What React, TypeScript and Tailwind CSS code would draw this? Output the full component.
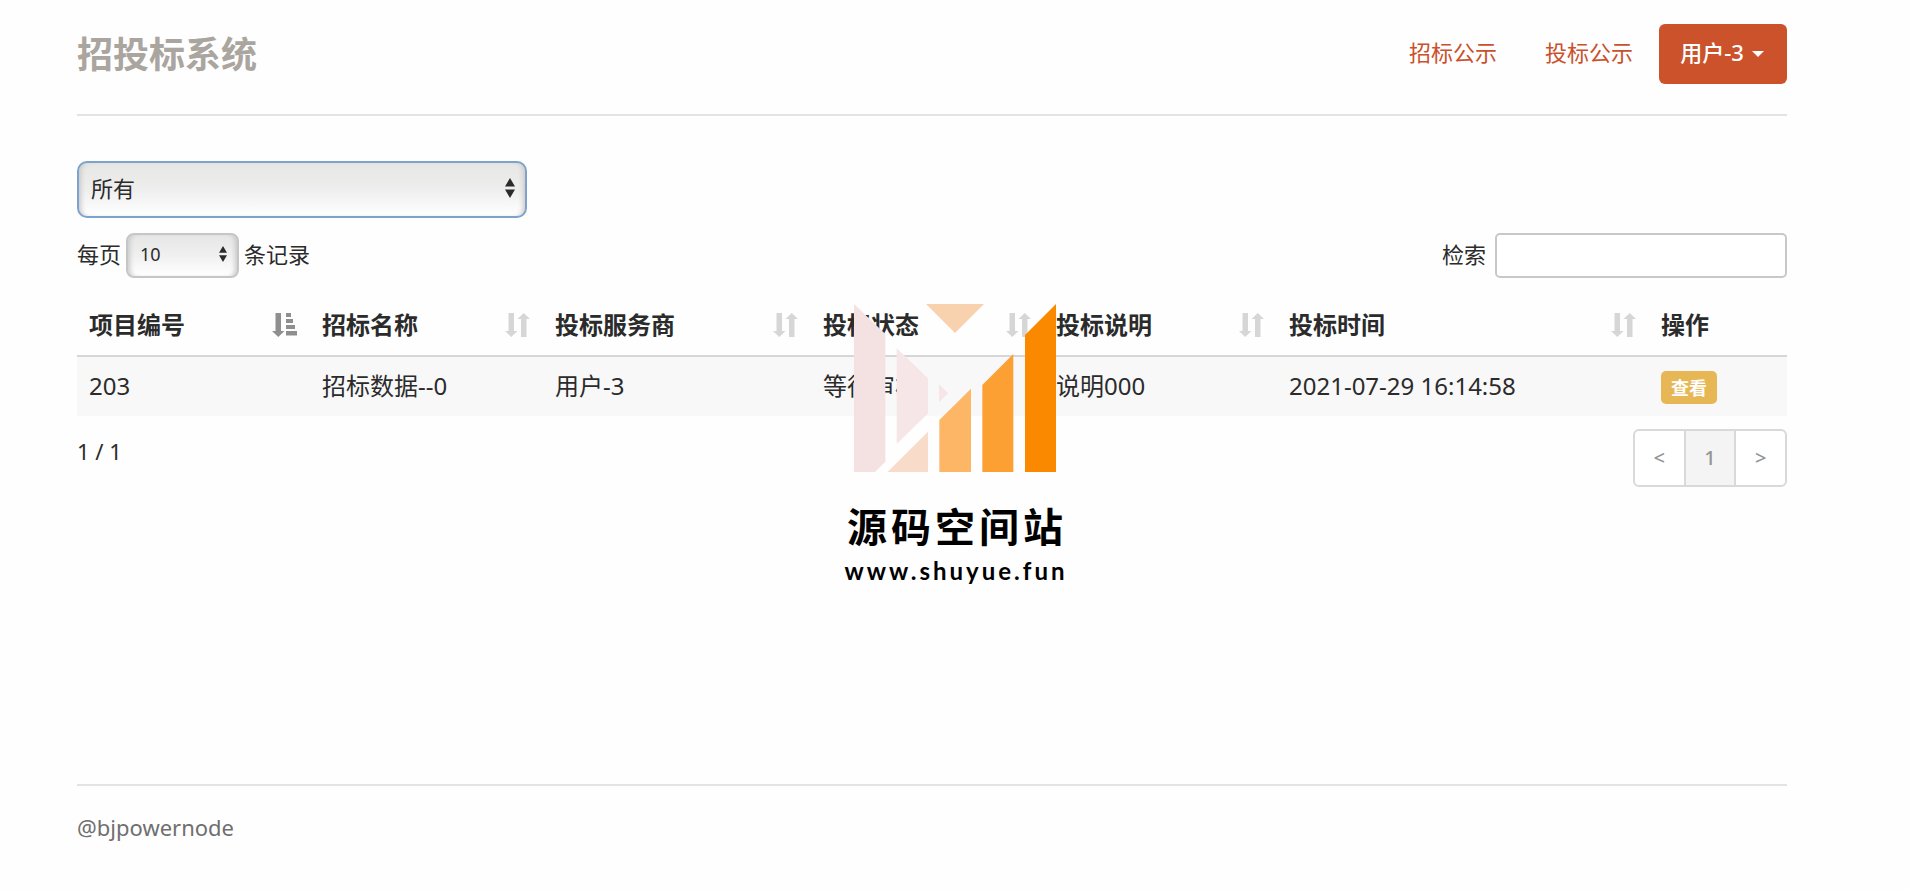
import { useState } from "react";

type SortState = "asc" | "none";

const columns: { title: string; width: string; sort?: SortState }[] = [
  { title: "项目编号", width: "w-[233px]", sort: "asc" },
  { title: "招标名称", width: "w-[233px]", sort: "none" },
  { title: "投标服务商", width: "w-[268px]", sort: "none" },
  { title: "投标状态", width: "w-[233px]", sort: "none" },
  { title: "投标说明", width: "w-[233px]", sort: "none" },
  { title: "投标时间", width: "w-[372px]", sort: "none" },
  { title: "操作", width: "w-[138px]" },
];

const rows = [["203", "招标数据--0", "用户-3", "等待审核", "说明000", "2021-07-29 16:14:58"]];

function SortIcon({ state }: { state: SortState }) {
  return (
    <svg viewBox="0 0 26 24" className={state === "asc" ? "h-6 w-[26px] text-[#8f8f8f]" : "h-6 w-[26px] text-[#d6d6d6]"} fill="currentColor" aria-hidden="true">
      <path d="M3.500 0H9v18h3.500L6.250 24 0 18h3.500z" />
      {state === "asc" ? (
        <path d="M14 0h5v4h-5zM14 6h7v4h-7zM14 12h9v4h-9zM14 18h11v4.500h-11z" />
      ) : (
        <path d="M16 24h5.500V6H25l-6.250-6L12.500 6H16z" />
      )}
    </svg>
  );
}

function Stepper({ className }: { className: string }) {
  return (
    <svg viewBox="0 0 10 20" className={className} fill="#2b2b2b" aria-hidden="true">
      <path d="M0 8.500h10L5 0zM0 11.500h10L5 20z" />
    </svg>
  );
}

function Watermark() {
  return (
    <div className="pointer-events-none absolute top-[304px] left-[842px] flex w-[226px] flex-col items-center text-black">
      <svg viewBox="102 42 606 504" className="h-[168px] w-[202px]" aria-hidden="true">
        <path fill="#f4e2e3" d="M102 42l94 90v383l-31 31h-63z" />
        <path fill="#f6e6e7" d="M230 175l94 90v105l-94 92z" />
        <path fill="#f6e6e7" d="M357 283l28 27-28 27z" />
        <path fill="#f8d2af" d="M318 42h174l-87 87z" />
        <path fill="#f8dbc8" d="M324 425v121H203z" />
        <path fill="#fdb665" d="M453 296v250h-95V390z" />
        <path fill="#fca034" d="M580 192v354h-93V285z" />
        <path fill="#fb8900" d="M708 42v504h-93V135z" />
      </svg>
      <p className="mt-[31px] pl-1 text-[40px] leading-[48px] font-bold tracking-widest whitespace-nowrap">源码空间站</p>
      <p className="mt-1 pl-0.5 font-[Lato] text-2xl leading-8 font-bold tracking-[3px] whitespace-nowrap">www.shuyue.fun</p>
    </div>
  );
}

export default function App() {
  const [status, setStatus] = useState("all");
  const [size, setSize] = useState("10");
  const [query, setQuery] = useState("");

  return (
    <div className="relative min-h-screen bg-[#fefefe] pr-[123px] pl-[77px] font-['Noto_Sans','Noto_Sans_CJK_SC',sans-serif] text-[22px] leading-8 text-[#2b2b2b]">
      <header className="flex h-[116px] items-start justify-between border-b-2 border-[#e3e3e3] pt-6">
        <h1 className="pt-[5px] text-4xl leading-[52px] font-bold text-[#aaa59f]">招投标系统</h1>
        <nav className="flex items-start text-[#c9512c]">
          <a href="#tender" className="px-6 py-3">招标公示</a>
          <a href="#bid" className="mr-0.5 px-6 py-3">投标公示</a>
          <button type="button" className="flex h-[60px] w-32 justify-center gap-2 rounded-md bg-[#cb522a] pt-3 pr-0.5 font-medium text-white">
            用户-3
            <svg viewBox="0 0 12 6" className="mt-[15px] h-1.5 w-3" fill="currentColor" aria-hidden="true">
              <path d="M0 0h12L6 6z" />
            </svg>
          </button>
        </nav>
      </header>

      <main className="min-h-[668px] pt-[45px]">
        <div className="relative w-[450px]">
          <select
            aria-label="投标状态"
            value={status}
            onChange={(e) => setStatus(e.target.value)}
            className="block h-[57px] w-full appearance-none rounded-[10px] border-2 border-[#7ba3cc] bg-linear-to-b from-[#e6e6e4] via-[#eeeeee] to-white px-3 pb-[3px] shadow-[inset_5px_0_5px_-3px_#c8c8c8,inset_-5px_0_5px_-3px_#cfc8c8] outline-none"
          >
            <option value="all">所有</option>
          </select>
          <Stepper className="pointer-events-none absolute top-[17px] right-3 h-5 w-2.5" />
        </div>

        <div className="mt-[15px] flex items-center justify-between">
          <label className="flex items-center gap-[5px]">
            <span className="pb-[3px]">每页</span>
            <span className="relative block w-[113px]">
              <select
                value={size}
                onChange={(e) => setSize(e.target.value)}
                className="block h-[45px] w-full appearance-none rounded-lg border-2 border-[#c6c6c6] bg-linear-to-b from-[#e6e6e6] via-[#f0f0f0] to-white px-3 pb-[3px] text-lg shadow-[inset_5px_0_5px_-3px_#c8c8c8,inset_-5px_0_5px_-3px_#c8c8c8]"
              >
                <option>10</option>
              </select>
              <Stepper className="pointer-events-none absolute top-[13px] right-3 h-4 w-2" />
            </span>
            <span className="pb-[3px]">条记录</span>
          </label>
          <label className="flex items-center gap-[9px]">
            <span className="pb-[3px]">检索</span>
            <input
              type="search"
              value={query}
              onChange={(e) => setQuery(e.target.value)}
              className="h-[45px] w-[292px] rounded-[5px] border-2 border-[#c8c8c8] bg-white px-3"
            />
          </label>
        </div>

        <table className="mt-[17px] w-full table-fixed border-collapse text-2xl leading-9">
          <thead>
            <tr className="border-b-2 border-[#d6d6d6]">
              {columns.map((c) => (
                <th key={c.title} className={`${c.width} p-3 text-left font-bold`}>
                  <span className="flex items-center justify-between">
                    {c.title}
                    {c.sort && <SortIcon state={c.sort} />}
                  </span>
                </th>
              ))}
            </tr>
          </thead>
          <tbody>
            {rows.map((r) => (
              <tr key={r[0]} className="bg-[#f8f8f8]">
                {r.map((cell) => (
                  <td key={cell} className="px-3 pt-2.5 pb-3">{cell}</td>
                ))}
                <td className="px-3 pt-2.5 pb-3">
                  <button type="button" className="mt-1 block h-[33px] rounded-[5px] bg-[#e8b755] px-2.5 text-lg leading-[30px] font-bold text-white">
                    查看
                  </button>
                </td>
              </tr>
            ))}
          </tbody>
        </table>

        <div className="mt-[13px] flex items-start justify-between">
          <p className="pt-1.5">1 / 1</p>
          <div className="flex h-[58px] w-[154px] divide-x-2 divide-[#d9d9d9] overflow-hidden rounded-md border-2 border-[#d9d9d9] bg-white text-xl font-medium text-[#949494]">
            <button type="button" aria-label="上一页" className="flex-1">&lt;</button>
            <button type="button" className="flex-1 bg-[#f4f4f4]">1</button>
            <button type="button" aria-label="下一页" className="flex-1">&gt;</button>
          </div>
        </div>
      </main>

      <footer className="border-t-2 border-[#e3e3e3] pt-[25px] text-[#6f6f6f]">@bjpowernode</footer>

      <Watermark />
    </div>
  );
}
